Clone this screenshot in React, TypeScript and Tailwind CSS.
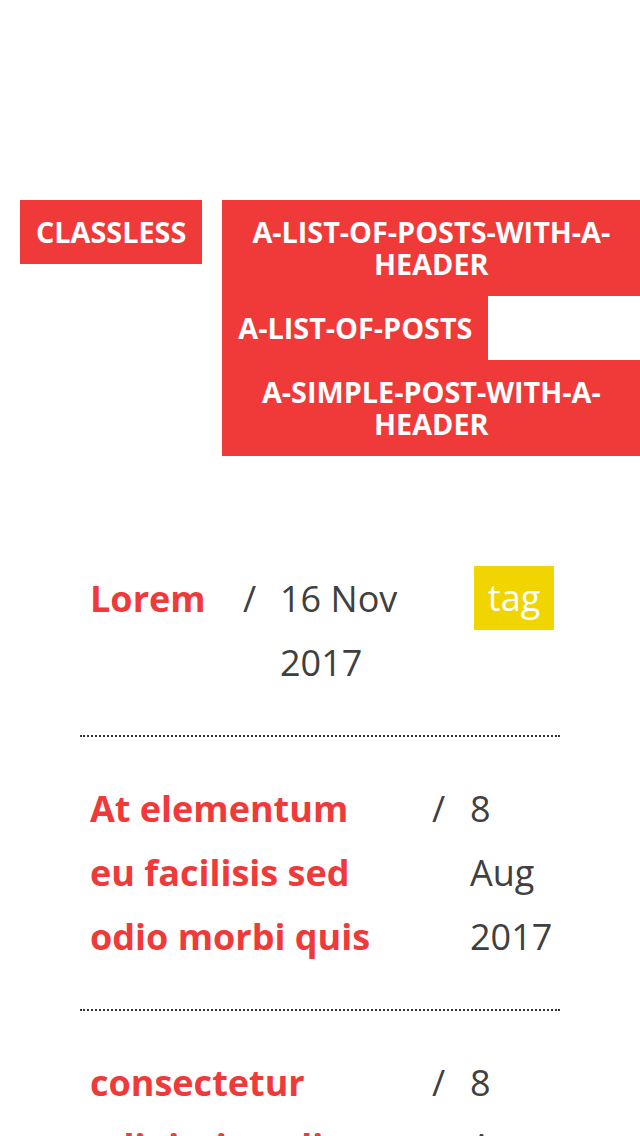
import React from "react";

const NAV = "bg-[#f03939] py-[16px] text-[28.8px] leading-[32px] font-bold uppercase text-white";

export default function App() {
  return (
    <div className="min-h-[1136px] bg-white overflow-hidden" style={{ fontFamily: '"Open Sans", sans-serif' }}>
      <nav className="pt-[200px] flex items-start">
        <div className={`${NAV} ml-[20px] px-[16px]`}>Classless</div>
        <div className="ml-[20px] w-[418px] shrink-0 flex flex-col items-start">
          <div className={`${NAV} w-full px-[16px] text-center`}>A-list-of-posts-with-a-header</div>
          <div className={`${NAV} px-[16px]`}>A-list-of-posts</div>
          <div className={`${NAV} w-full px-[16px] text-center`}>A-simple-post-with-a-header</div>
        </div>
      </nav>

      <div className="mx-[80px] mt-[110px] text-[36px] leading-[64px]">
        <div className="flex items-start pl-[10px] pt-[1px] pb-[40px] border-b-2 border-dotted border-[#333]">
          <div className="w-[153px] font-bold text-[#f03939]">Lorem</div>
          <div className="w-[37px] text-[#404040]">/</div>
          <div className="w-[194px] text-[#404040]">16 Nov 2017</div>
          <div className="w-[80px] -mt-[1px] bg-[#f0d500] text-white text-center">tag</div>
        </div>

        <div className="flex items-start pl-[10px] pt-[40px] pb-[40px] border-b-2 border-dotted border-[#333]">
          <div className="w-[342px] font-bold text-[#f03939]">
            <div className="max-w-[300px]">At elementum eu facilisis sed odio morbi quis</div>
          </div>
          <div className="w-[38px] text-[#404040]">/</div>
          <div className="w-[90px] text-[#404040]">8 Aug 2017</div>
        </div>

        <div className="flex items-start pl-[10px] pt-[40px] pb-[40px] border-b-2 border-dotted border-[#333]">
          <div className="w-[342px] font-bold text-[#f03939]">
            <div className="max-w-[300px]">consectetur adipiscing elit ut aliquam purus</div>
          </div>
          <div className="w-[38px] text-[#404040]">/</div>
          <div className="w-[90px] text-[#404040]">8 Aug 2017</div>
        </div>
      </div>
    </div>
  );
}
